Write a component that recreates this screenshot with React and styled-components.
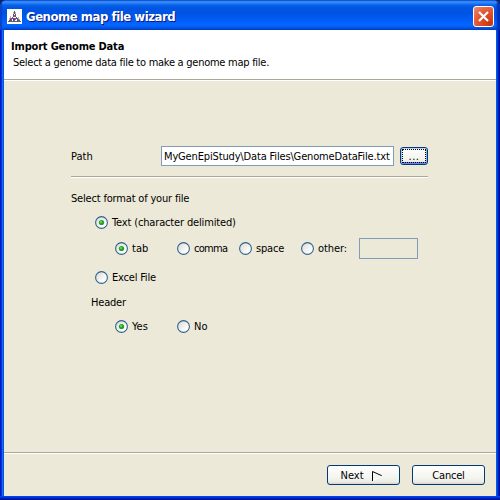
import React from "react";
import styled, { createGlobalStyle } from "styled-components";

const Global = createGlobalStyle`
  * { box-sizing: border-box; }
  html, body { margin: 0; padding: 0; background: #0a246a; overflow: hidden; }
  body { font: 11px/14px "DejaVu Sans Condensed", "DejaVu Sans", sans-serif; font-stretch: condensed; color: #000; }
  button, input { font: inherit; color: inherit; }
`;

const Window = styled.div`
  width: 500px;
  height: 500px;
  display: flex;
  flex-direction: column;
  border-radius: 7px 7px 0 0;
  overflow: hidden;
  background: #0a4ae6;
`;

const TitleBar = styled.header`
  height: 30px;
  flex: none;
  display: flex;
  align-items: center;
  padding: 3px 6px 0 7px;
  background: linear-gradient(180deg, #0353d8 0, #3d8df8 1.5px, #2a83f6 3px, #0862ea 5px, #0055e0 8px, #0054e4 14px, #025dfa 21px, #0567ff 25px, #025cf0 27px, #0144c8 30px);
  box-shadow: inset 2px 0 1px #0842cf, inset -3px 0 2px #0030b5;
`;

const Title = styled.h1`
  margin: 0 auto 0 4px;
  padding-top: 1px;
  font: bold 13px/18px "DejaVu Sans Condensed", "DejaVu Sans", sans-serif;
  font-stretch: condensed;
  letter-spacing: ${(p) => p.$tracking}px;
  color: #fff;
  text-shadow: 1px 1px 0 #0a1883;
  white-space: nowrap;
`;

const CloseButton = styled.button`
  width: 21px;
  height: 21px;
  margin-bottom: 1px;
  padding: 0;
  display: grid;
  place-items: center;
  border: 1px solid #fff;
  border-radius: 3px;
  background: radial-gradient(circle at 85% 90%, #c73612 0, #e2552f 55%, #ec8c70 100%);
`;

const Frame = styled.div`
  flex: 1;
  display: flex;
  padding: 0 4px 4px;
  background:
    linear-gradient(180deg, #0044f0 0 1px, #0030e0 1px 2px, #001fb8 2px 3px, #00138c 3px) 0 100% / 100% 4px no-repeat,
    linear-gradient(90deg, #0019cf 0 1px, #0831d9 1px 2px, #166aee 2px 3px, #0855dd 3px 4px, transparent 4px calc(100% - 4px), #0855e8 calc(100% - 4px) calc(100% - 3px), #0040e6 calc(100% - 3px) calc(100% - 2px), #0020b5 calc(100% - 2px) calc(100% - 1px), #00138c calc(100% - 1px));
`;

const Client = styled.main`
  flex: 1;
  display: flex;
  flex-direction: column;
  background: #ece9d8;
`;

const Banner = styled.section`
  height: 49px;
  padding: 10px 8px 0 7px;
  background: #fff;
`;

const BannerTitle = styled.div`
  font-weight: bold;
  height: 16px;
  letter-spacing: ${(p) => p.$tracking}px;
`;

const BannerText = styled.div`
  padding-left: 2px;
  letter-spacing: ${(p) => p.$tracking}px;
`;

const Rule = styled.div`
  height: 2px;
  flex: none;
  background: linear-gradient(180deg, #aca899 0 1px, #fff 1px);
`;

const Form = styled.section`
  flex: 1;
  padding: 65px 68px 0 67px;
`;

const Row = styled.div`
  display: flex;
  align-items: center;
  height: ${(p) => p.$height}px;
  margin-top: ${(p) => p.$gap || 0}px;
  padding-left: ${(p) => p.$indent || 0}px;
`;

const Label = styled.span`
  white-space: pre;
  letter-spacing: ${(p) => p.$tracking || 0}px;
`;

const PathLabel = styled(Label)`
  width: 90px;
  padding-top: 1px;
`;

const Heading = styled(Label)`
  padding-top: 2px;
`;

const Field = styled.input`
  width: ${(p) => p.$width}px;
  height: ${(p) => p.$height}px;
  padding: 0 0 0 2px;
  border: 1px solid #7f9db9;
  border-radius: 0;
  outline: none;
  background: ${(p) => (p.disabled ? "#ece9d8" : "#fff")};
  letter-spacing: ${(p) => p.$tracking || 0}px;
`;

const PushButton = styled.button`
  width: 73px;
  height: 20px;
  padding: 1px 0 0;
  display: flex;
  align-items: center;
  justify-content: center;
  gap: 8px;
  border: 1px solid #003c74;
  border-radius: 3px;
  background: linear-gradient(180deg, #fff, #f3f3ee 70%, #ecebe5 88%, #d8d2c6);
`;

const NextButton = styled(PushButton)`
  padding-right: 4px;
`;

const BrowseButton = styled(PushButton)`
  width: 28px;
  height: 18px;
  margin-left: 6px;
  padding: 0;
  box-shadow: inset 0 1px #bcd4f6, inset 1px 0 #a6c3f0, inset -1px 0 #89ade4, inset 0 -2px #6982ee;
`;

const FocusRing = styled.span`
  flex: none;
  width: 24px;
  height: 14px;
  border: 1px dotted #000;
  line-height: 14px;
  letter-spacing: 0.5px;
  text-align: center;
`;

const Option = styled.label`
  display: flex;
  align-items: center;
  gap: 4px;
  width: ${(p) => (p.$width ? `${p.$width}px` : "auto")};
`;

const Footer = styled.footer`
  height: 42px;
  flex: none;
  display: flex;
  justify-content: flex-end;
  gap: 12px;
  padding: 11px 11px 0;
`;

const RadioSvg = styled.svg`
  display: block;
  flex: none;
`;

function Radio({ label, on, width, tracking }) {
  return (
    <Option $width={width}>
      <RadioSvg width="13" height="13" viewBox="0 0 13 13">
        <defs>
          <linearGradient id="radioFace" x1="0" y1="0" x2="1" y2="1">
            <stop offset="0.1" stopColor="#dcdcd7" />
            <stop offset="0.75" stopColor="#fff" />
          </linearGradient>
        </defs>
        <circle cx="6.5" cy="6.5" r="5.9" fill="url(#radioFace)" stroke="#2f628c" strokeWidth="1.1" />
        {on && (
          <>
            <circle cx="6.5" cy="6.5" r="2.6" fill="#21a121" />
            <circle cx="6" cy="6" r="1.2" fill="#55d551" />
          </>
        )}
      </RadioSvg>
      <Label $tracking={tracking}>{label}</Label>
    </Option>
  );
}

function AppIcon() {
  return (
    <svg width="15" height="15" viewBox="0 0 15 15" shapeRendering="crispEdges">
      <path fill="#fff" d="M0 0h15v15H0z" />
      <path fill="#555b70" d="M7 2h1v3H7zM6 5h1v3H6zM8 5h1v3H8zM5 8h1v2H5zM9 8h1v2H9zM4 10h1v2H4zM10 10h1v2h-1z" />
      <path fill="#b8b8c4" d="M6 3h1v2H6zM8 3h1v2H8zM3 7h1v2H3zM11 8h1v2h-1zM2 9h1v2H2zM12 10h1v1h-1z" />
      <path fill="#e04848" d="M7 6h1v2H7zM3 9h2v1H3zM8 9h1v2H8zM11 10h1v1h-1z" />
      <path fill="#3849bd" d="M6 9h2v2H6zM10 9h1v1h-1zM3 10h1v1H3z" />
      <path fill="#5c6070" d="M1 12h13v1H1zM2 11h2v1H2zM6 11h2v1H6zM11 11h2v1h-2z" />
    </svg>
  );
}

export default function App() {
  return (
    <>
      <Global />
      <Window>
        <TitleBar>
          <AppIcon />
          <Title $tracking={-0.46}>Genome map file wizard</Title>
          <CloseButton aria-label="Close">
            <svg width="13" height="13" viewBox="0 0 13 13">
              <path d="M2 2l9 9M11 2l-9 9" stroke="#fff" strokeWidth="2.2" />
            </svg>
          </CloseButton>
        </TitleBar>
        <Frame>
          <Client>
            <Banner>
              <BannerTitle $tracking={-0.18}>Import Genome Data</BannerTitle>
              <BannerText $tracking={-0.26}>Select a genome data file to make a genome map file.</BannerText>
            </Banner>
            <Rule />
            <Form>
              <Row $height={20}>
                <PathLabel>Path</PathLabel>
                <Field $width={233} $height={20} $tracking={-0.15} readOnly value="MyGenEpiStudy\Data Files\GenomeDataFile.txt" />
                <BrowseButton>
                  <FocusRing>...</FocusRing>
                </BrowseButton>
              </Row>
              <Row $height={10} />
              <Rule />
              <Row $height={14} $gap={13}>
                <Heading $tracking={-0.18}>Select format of your file</Heading>
              </Row>
              <Row $height={13} $gap={11} $indent={24}>
                <Radio label="Text (character delimited)" on tracking={-0.15} />
              </Row>
              <Row $height={21} $gap={9} $indent={44}>
                <Radio label="tab" on width={62} />
                <Radio label="comma" width={62} tracking={-0.7} />
                <Radio label="space" width={62} tracking={-0.2} />
                <Radio label="other:" width={58} tracking={-0.1} />
                <Field $width={59} $height={21} disabled />
              </Row>
              <Row $height={13} $gap={12} $indent={24}>
                <Radio label="Excel File" tracking={-0.2} />
              </Row>
              <Row $height={14} $gap={11} $indent={20}>
                <Heading $tracking={-0.2}>Header</Heading>
              </Row>
              <Row $height={13} $gap={11} $indent={44}>
                <Radio label="Yes" on width={62} />
                <Radio label="No" />
              </Row>
            </Form>
            <Rule />
            <Footer>
              <NextButton>
                <Label>Next</Label>
                <svg width="11" height="10" viewBox="0 0 11 10">
                  <path d="M.5 10V.5L10 4.8" fill="none" stroke="#000" />
                  <path d="M10 5L1 9.5" stroke="#fff" />
                </svg>
              </NextButton>
              <PushButton>
                <Label $tracking={-0.2}>Cancel</Label>
              </PushButton>
            </Footer>
          </Client>
        </Frame>
      </Window>
    </>
  );
}
